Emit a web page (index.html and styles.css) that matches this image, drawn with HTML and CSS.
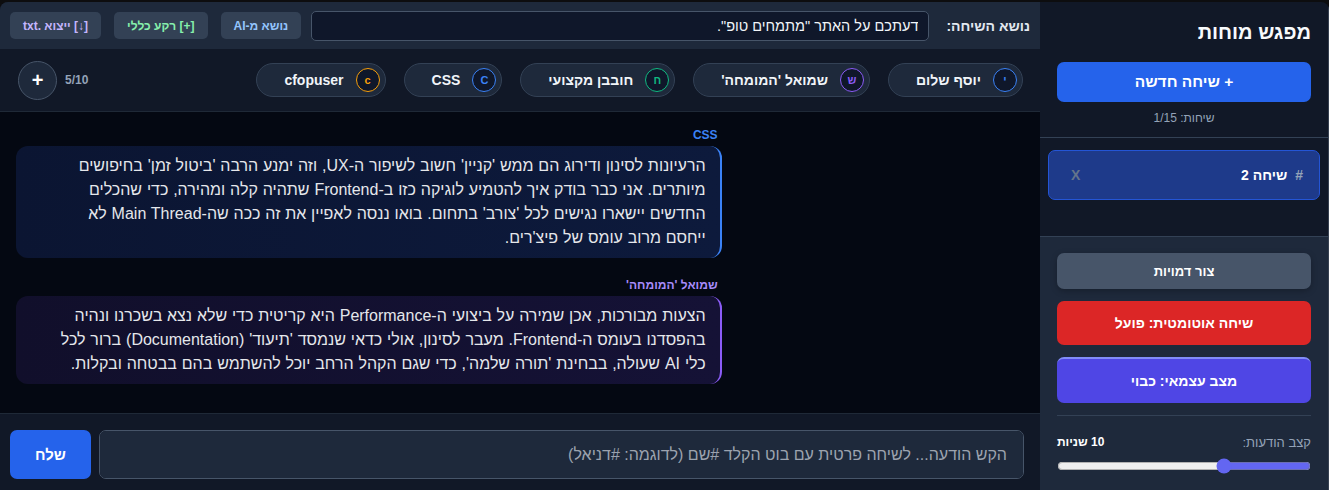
FILE: index.html
```html
<!DOCTYPE html>
<html lang="he" dir="rtl">
<head>
<meta charset="utf-8">
<title>מפגש מוחות</title>
<link rel="stylesheet" href="styles.css">
</head>
<body>
<div class="app">
  <aside class="sidebar">
    <div class="side-top">
      <h1 class="title">מפגש מוחות</h1>
      <button class="btn btn-new">+ שיחה חדשה</button>
      <div class="count">שיחות: 1/15</div>
    </div>
    <div class="conv-list">
      <div class="conv">
        <span class="hash">#</span>
        <span class="conv-name">שיחה 2</span>
        <span class="close">X</span>
      </div>
    </div>
    <div class="side-bottom">
      <button class="btn btn-gray">צור דמויות</button>
      <button class="btn btn-red">שיחה אוטומטית: פועל</button>
      <button class="btn btn-indigo">מצב עצמאי: כבוי</button>
      <div class="divider"></div>
      <div class="rate-row">
        <span class="rate-label">קצב הודעות:</span>
        <span class="rate-val">10 שניות</span>
      </div>
      <input type="range" class="slider" min="5" max="20" value="10">
    </div>
  </aside>

  <main class="main">
    <header class="topbar">
      <label class="topic-label">נושא השיחה:</label>
      <input class="topic-input" type="text" value='דעתכם על האתר "מתמחים טופ".'>
      <div class="tools">
        <button class="tool tool-blue">נושא מ-AI</button>
        <button class="tool tool-green">[+] רקע כללי</button>
        <button class="tool tool-purple">[↓] ייצוא .txt</button>
      </div>
    </header>

    <div class="people">
      <div class="chips">
        <div class="chip"><span class="av av-blue">י</span><span class="chip-name">יוסף שלום</span></div>
        <div class="chip"><span class="av av-purple">ש</span><span class="chip-name">שמואל 'המומחה'</span></div>
        <div class="chip"><span class="av av-green">ח</span><span class="chip-name">חובבן מקצועי</span></div>
        <div class="chip"><span class="av av-blue">C</span><span class="chip-name">CSS</span></div>
        <div class="chip"><span class="av av-orange">c</span><span class="chip-name">cfopuser</span></div>
      </div>
      <div class="people-end">
        <span class="people-count">5/10</span>
        <button class="add-btn">+</button>
      </div>
    </div>

    <section class="messages">
      <div class="msg">
        <div class="sender sender-blue">CSS</div>
        <div class="bubble bubble-blue">הרעיונות לסינון ודירוג הם ממש 'קניין' חשוב לשיפור ה-UX, וזה ימנע הרבה 'ביטול זמן' בחיפושים מיותרים. אני כבר בודק איך להטמיע לוגיקה כזו ב-Frontend שתהיה קלה ומהירה, כדי שהכלים החדשים יישארו נגישים לכל 'צורב' בתחום. בואו ננסה לאפיין את זה ככה שה-Main Thread לא ייחסם מרוב עומס של פיצ'רים.</div>
      </div>
      <div class="msg">
        <div class="sender sender-purple">שמואל 'המומחה'</div>
        <div class="bubble bubble-purple">הצעות מבורכות, אכן שמירה על ביצועי ה-Performance היא קריטית כדי שלא נצא בשכרנו ונהיה בהפסדנו בעומס ה-Frontend. מעבר לסינון, אולי כדאי שנמסד 'תיעוד' (Documentation) ברור לכל כלי AI שעולה, בבחינת 'תורה שלמה', כדי שגם הקהל הרחב יוכל להשתמש בהם בבטחה ובקלות.</div>
      </div>
    </section>

    <footer class="composer">
      <textarea class="composer-input" placeholder="הקש הודעה... לשיחה פרטית עם בוט הקלד #שם (לדוגמה: #דניאל)"></textarea>
      <button class="send">שלח</button>
    </footer>
  </main>
</div>
</body>
</html>
```

FILE: styles.css
```css
* { box-sizing: border-box; }

html, body {
  margin: 0;
  padding: 0;
  background: #0d0d0f;
  font-family: "Liberation Sans", "DejaVu Sans", sans-serif;
  color: #e5e7eb;
  overflow: hidden;
}

.app {
  margin-top: 2px;
  height: 488px;
  display: grid;
  grid-template-columns: 289px 1fr;
  border-top-left-radius: 8px;
  border-top-right-radius: 8px;
  overflow: hidden;
}

/* ---------- Sidebar ---------- */
.sidebar {
  display: flex;
  flex-direction: column;
  background: #111827;
  border-right: 1px solid #374151;
  min-height: 0;
}

.side-top {
  padding: 18px 17px 0;
  height: 136px;
  border-bottom: 1px solid #334155;
  display: flex;
  flex-direction: column;
}

.title {
  margin: 0;
  font-size: 20px;
  line-height: 24px;
  font-weight: 700;
  color: #f8fafc;
}

.btn {
  display: block;
  width: 100%;
  border: none;
  border-radius: 7px;
  color: #fff;
  font-family: inherit;
  font-weight: 700;
  font-size: 13px;
  cursor: pointer;
}

.btn-new {
  margin-top: 18px;
  height: 40px;
  background: #2563eb;
  font-size: 15.5px;
}

.count {
  margin-top: 9px;
  text-align: center;
  font-size: 12px;
  color: #94a3b8;
}

.conv-list {
  flex: 1;
  padding: 12px 8px;
}

.conv {
  height: 50px;
  display: flex;
  align-items: center;
  gap: 8px;
  padding: 0 16px 0 22px;
  background: #1e3a8a;
  border: 1px solid #2455d6;
  border-radius: 7px;
}

.hash {
  color: #94a3b8;
  font-weight: 700;
  font-size: 14px;
}

.conv-name {
  flex: 1;
  font-weight: 700;
  font-size: 14px;
  color: #fff;
}

.close {
  color: #64748b;
  font-weight: 700;
  font-size: 14px;
}

.side-bottom {
  background: #1e293b;
  border-top: 1px solid #334155;
  padding: 16px 17px 16px;
  display: flex;
  flex-direction: column;
  gap: 12px;
}

.btn-gray {
  height: 36px;
  background: #475569;
  box-shadow: 0 2px 6px rgba(0, 0, 0, 0.25);
}

.btn-red {
  height: 44px;
  background: #dc2626;
  font-size: 14px;
}

.btn-indigo {
  height: 46px;
  background: #4f46e5;
  border-top: 2px solid #818cf8;
  font-size: 14px;
}

.divider {
  height: 1px;
  background: #334155;
}

.rate-row {
  margin-top: 6px;
  display: flex;
  justify-content: space-between;
  align-items: center;
  height: 16px;
}

.rate-label {
  font-size: 13px;
  color: #94a3b8;
}

.rate-val {
  font-size: 12px;
  font-weight: 700;
  color: #fff;
}

.slider {
  margin: -4px 0 0;
  width: 100%;
  height: 16px;
  accent-color: #6366f1;
}

/* ---------- Main ---------- */
.main {
  display: flex;
  flex-direction: column;
  min-width: 0;
  min-height: 0;
  background: #111827;
}

.topbar {
  height: 47px;
  flex-shrink: 0;
  display: flex;
  align-items: center;
  padding: 0 10px;
  background: #1e293b;
}

.topic-label {
  font-size: 14px;
  font-weight: 700;
  color: #e2e8f0;
  margin-left: 17px;
  white-space: nowrap;
}

.topic-input {
  flex: 1;
  height: 30px;
  background: #0f172a;
  border: 1px solid #475569;
  border-radius: 5px;
  color: #f1f5f9;
  font-family: inherit;
  font-size: 14.5px;
  padding: 0 10px;
  direction: rtl;
}

.tools {
  display: flex;
  gap: 13px;
  margin-right: 10px;
}

.tool {
  height: 27px;
  border: none;
  border-radius: 5px;
  background: #334155;
  font-family: inherit;
  font-size: 12px;
  font-weight: 700;
  padding: 0 13px;
  white-space: nowrap;
}

.tool-blue { color: #93c5fd; }
.tool-green { color: #86efac; }
.tool-purple { color: #c4b5fd; }

.people {
  height: 63px;
  flex-shrink: 0;
  display: flex;
  align-items: center;
  justify-content: space-between;
  padding: 0 17px 0 18px;
  background: #111827;
  border-bottom: 1px solid #1f2937;
}

.chips {
  display: flex;
  gap: 18px;
}

.chip {
  height: 34px;
  display: flex;
  align-items: center;
  gap: 12px;
  padding: 0 5px 0 27px;
  background: #1e293b;
  border: 1px solid #334155;
  border-radius: 17px;
}

.av {
  width: 24px;
  height: 24px;
  border-radius: 50%;
  border: 1.5px solid currentColor;
  display: flex;
  align-items: center;
  justify-content: center;
  font-size: 11px;
  font-weight: 700;
  background: #0f172a;
}

.av-blue { color: #3b82f6; }
.av-purple { color: #8b5cf6; }
.av-green { color: #10b981; }
.av-orange { color: #f59e0b; }

.chip-name {
  font-size: 14px;
  font-weight: 700;
  color: #f1f5f9;
  white-space: nowrap;
}

.people-end {
  display: flex;
  align-items: center;
  gap: 8px;
}

.people-count {
  font-size: 12px;
  font-weight: 700;
  color: #94a3b8;
}

.add-btn {
  width: 39px;
  height: 39px;
  border-radius: 50%;
  background: #1e293b;
  border: 1px solid #475569;
  color: #fff;
  font-size: 20px;
  font-weight: 700;
  line-height: 1;
  padding: 0;
  font-family: inherit;
}

.messages {
  flex: 1;
  min-height: 0;
  overflow: hidden;
  background: #040812;
  padding: 16px 16px;
  display: flex;
  flex-direction: column;
  align-items: flex-end;
  gap: 20px;
}

.msg {
  max-width: 70%;
  display: flex;
  flex-direction: column;
}

.sender {
  font-size: 12px;
  font-weight: 700;
  padding-right: 4px;
  margin-bottom: 4px;
}

.sender-blue { color: #3b82f6; }
.sender-purple { color: #a78bfa; }

.bubble {
  font-size: 16px;
  line-height: 24px;
  word-spacing: 0.4px;
  color: #e5e7eb;
  padding: 8px 14px 8px 30px;
  border-radius: 12px;
}

.bubble-blue {
  background: linear-gradient(to left, #0d1a3c, #0b1532);
  border-right: 2px solid #3b82f6;
}

.bubble-purple {
  background: linear-gradient(to left, #151236, #110f2b);
  border-right: 2px solid #8b5cf6;
}

.composer {
  height: 77px;
  flex-shrink: 0;
  display: flex;
  gap: 8px;
  padding: 16px 16px 11px 10px;
  background: #111827;
  border-top: 1px solid #1f2937;
}

.composer-input {
  flex: 1;
  resize: none;
  background: #1e293b;
  border: 1px solid #475569;
  border-radius: 7px;
  color: #e5e7eb;
  font-family: inherit;
  font-size: 16px;
  padding: 14px 16px;
  line-height: 20px;
}

.composer-input::placeholder {
  color: #9ca3af;
}

.send {
  width: 81px;
  background: #2563eb;
  border: none;
  border-radius: 7px;
  color: #fff;
  font-family: inherit;
  font-weight: 700;
  font-size: 15px;
}
```
